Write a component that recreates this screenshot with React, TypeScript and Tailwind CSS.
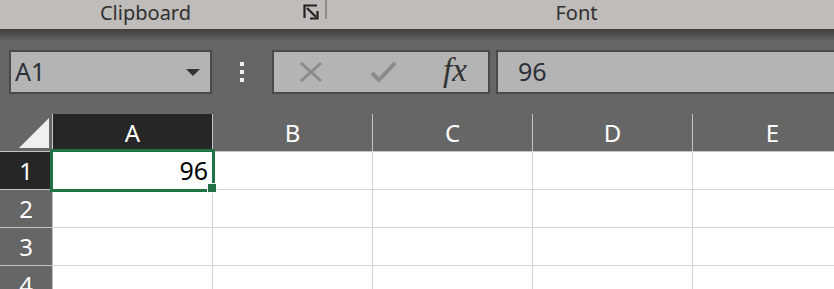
import React from "react";

const COLS = ["A", "B", "C", "D", "E"];
const ROWS = [1, 2, 3, 4];

function Launcher() {
  return (
    <svg width="16" height="16" viewBox="0 0 16 16" className="block">
      <path d="M1.5 14V1.5H14" fill="none" stroke="#222" strokeWidth="2.2" />
      <path d="M4 4L13 13" stroke="#222" strokeWidth="2.2" />
      <path d="M14.5 7V14.5H7" fill="none" stroke="#222" strokeWidth="2.2" />
    </svg>
  );
}

export default function App() {
  return (
    <div className="w-[834px] h-[289px] overflow-hidden bg-[#666666] font-['Noto_Sans',sans-serif]">
      {/* ribbon group labels */}
      <div className="h-[29px] bg-[#c0bcb9] flex items-start text-[#303030] text-[20px] leading-[26px]">
        <div className="w-[291px] text-center">Clipboard</div>
        <div className="pt-[4px] pl-[12px] w-[22px] box-content">
          <Launcher />
        </div>
        <div className="w-[2px] h-[19px] bg-[#8d8a88]" />
        <div className="w-[499px] text-center">Font</div>
      </div>
      <div className="h-[11px] bg-gradient-to-b from-[#3e3e3e] to-[#626262]" />

      {/* formula bar */}
      <div className="h-[74px] bg-[#666666] flex items-start pt-[10px] pl-[9px]">
        <div className="w-[203px] h-[44px] bg-[#b4b4b4] border-2 border-[#4a4a4a] flex items-center justify-between pl-[4px] pr-[10px]">
          <span className="text-[25px] text-[#2b3038]">A1</span>
          <svg width="14" height="7" viewBox="0 0 14 7">
            <path d="M0 0H14L7 7Z" fill="#333" />
          </svg>
        </div>
        <div className="w-[60px] flex flex-col items-center gap-[4px] pt-[12px]">
          <div className="w-[4px] h-[4px] bg-[#eeeeee]" />
          <div className="w-[4px] h-[4px] bg-[#eeeeee]" />
          <div className="w-[4px] h-[4px] bg-[#eeeeee]" />
        </div>
        <div className="w-[218px] h-[44px] bg-[#b4b4b4] border-2 border-[#4a4a4a] flex items-center">
          <div className="w-[25px]" />
          <svg width="24" height="22" viewBox="0 0 24 22">
            <path d="M2 2L22 20M22 2L2 20" stroke="#8a8a8a" strokeWidth="3" />
          </svg>
          <div className="w-[47px]" />
          <svg width="27" height="22" viewBox="0 0 27 22">
            <path d="M2 12L9 19L25 2" fill="none" stroke="#8a8a8a" strokeWidth="4" />
          </svg>
          <div className="w-[46px]" />
          <span className="font-['Liberation_Serif',serif] italic text-[33px] leading-none text-[#333] -mt-[4px]">fx</span>
        </div>
        <div className="w-[6px]" />
        <div className="flex-1 h-[44px] bg-[#b4b4b4] border-2 border-r-0 border-[#4a4a4a] flex items-center pl-[20px]">
          <span className="text-[25px] text-[#2b3038]">96</span>
        </div>
      </div>

      {/* sheet grid */}
      <div className="grid grid-cols-[53px_repeat(5,160px)] text-[24px] leading-none">
        <div className="h-[38px] bg-[#666666] border-r border-b border-[#c4c4c4] flex items-end justify-end pr-[3px] pb-[3px]">
          <svg width="30" height="30" viewBox="0 0 30 30">
            <path d="M30 0V30H0Z" fill="#efefef" />
          </svg>
        </div>
        {COLS.map((c) => (
          <div
            key={c}
            className={`h-[38px] border-r border-b border-[#c4c4c4] flex items-center justify-center text-white ${c === "A" ? "bg-[#262626]" : "bg-[#666666]"}`}
          >
            {c}
          </div>
        ))}
        {ROWS.map((r) => (
          <React.Fragment key={r}>
            <div
              className={`h-[38px] border-r border-b border-[#c4c4c4] flex items-center justify-center text-white ${r === 1 ? "bg-[#262626]" : "bg-[#666666]"}`}
            >
              {r}
            </div>
            {COLS.map((c) => (
              <div key={c + r} className={`relative h-[38px] bg-white border-r border-b border-[#d4d4d4] ${r === 1 && c === "A" ? "z-10" : ""}`}>
                {r === 1 && c === "A" && (
                  <>
                    <div className="absolute right-[4px] top-0 h-[37px] flex items-center text-black text-[25px]">96</div>
                    <div className="absolute -left-[3px] -top-[3px] w-[165px] h-[43px] border-[3px] border-[#217346]" />
                    <div className="absolute left-[154px] top-[31px] w-[10px] h-[10px] bg-[#217346] border border-white" />
                  </>
                )}
              </div>
            ))}
          </React.Fragment>
        ))}
      </div>
    </div>
  );
}
